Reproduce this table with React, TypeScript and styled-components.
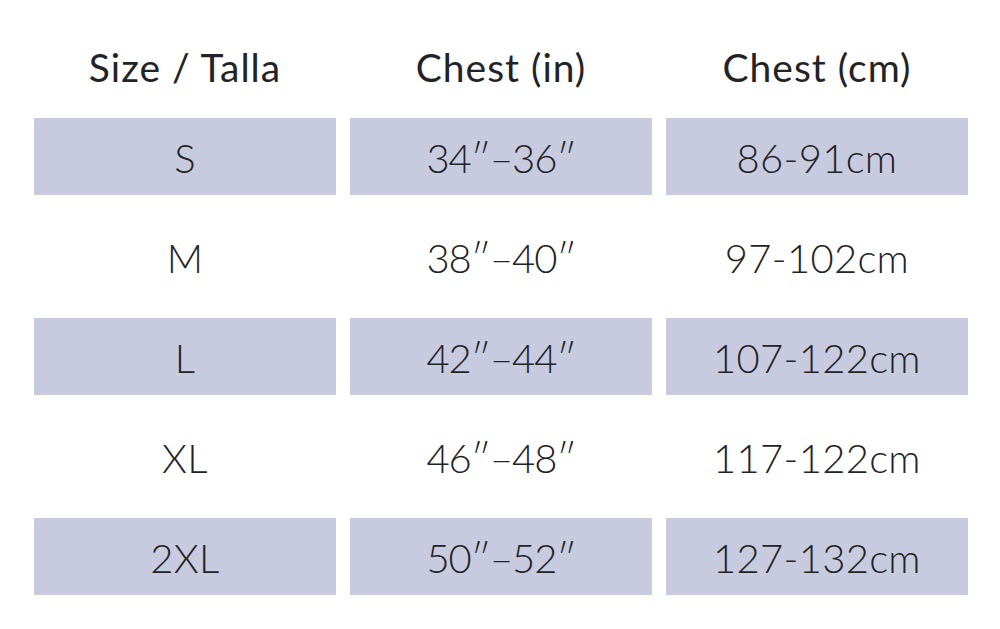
import React from "react";
import styled, { createGlobalStyle } from "styled-components";

const Global = createGlobalStyle`
  html, body { margin: 0; padding: 0; background: #ffffff; }
  body { font-family: Lato, "Noto Sans", sans-serif; color: #222326; }
`;

const Page = styled.div`
  width: 1000px;
  height: 629px;
  box-sizing: border-box;
  padding: 29px 32px 0 34px;
  background: #fff;
`;

const Grid = styled.div`
  display: grid;
  grid-template-columns: repeat(3, 302px);
  column-gap: 14px;
`;

const HeaderRow = styled(Grid)`
  height: 76px;
  margin-bottom: 13px;
`;

const HeaderCell = styled.div`
  display: flex;
  align-items: center;
  justify-content: center;
  font-size: 39px;
  font-weight: 400;
  letter-spacing: 1px;
`;

const Body = styled(Grid)`
  grid-auto-rows: 77px;
  row-gap: 23px;
`;

const Cell = styled.div<{ $shaded: boolean; $tight?: boolean }>`
  display: flex;
  align-items: center;
  justify-content: center;
  padding-top: 3px;
  box-sizing: border-box;
  background: ${(p) => (p.$shaded ? "#c8cbe0" : "transparent")};
  font-size: 40px;
  font-weight: 300;
  letter-spacing: ${(p) => (p.$tight ? "-1px" : "0.3px")};
  white-space: nowrap;
`;

const rows: [string, string, string][] = [
  ["S", "34″–36″", "86-91cm"],
  ["M", "38″–40″", "97-102cm"],
  ["L", "42″–44″", "107-122cm"],
  ["XL", "46″–48″", "117-122cm"],
  ["2XL", "50″–52″", "127-132cm"],
];

export default function App() {
  return (
    <>
      <Global />
      <Page>
        <HeaderRow>
          <HeaderCell>Size / Talla</HeaderCell>
          <HeaderCell>Chest (in)</HeaderCell>
          <HeaderCell>Chest (cm)</HeaderCell>
        </HeaderRow>
        <Body>
          {rows.map(([size, inches, cm], i) => (
            <React.Fragment key={size}>
              <Cell $shaded={i % 2 === 0}>{size}</Cell>
              <Cell $shaded={i % 2 === 0} $tight>
                {inches}
              </Cell>
              <Cell $shaded={i % 2 === 0}>{cm}</Cell>
            </React.Fragment>
          ))}
        </Body>
      </Page>
    </>
  );
}
